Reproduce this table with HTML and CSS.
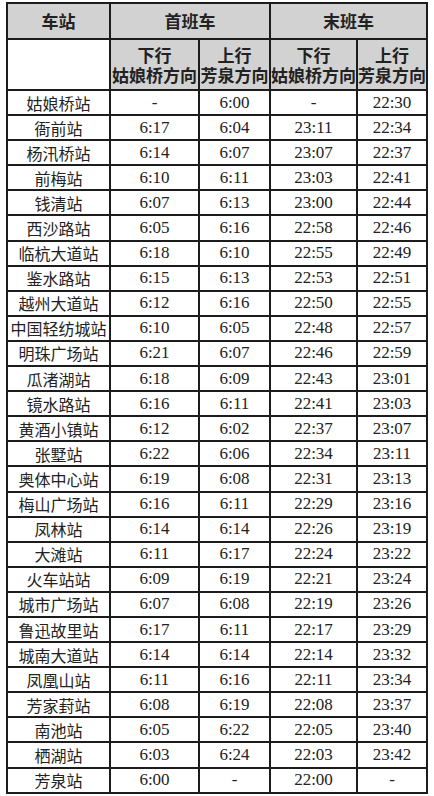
FILE: index.html
```html
<!DOCTYPE html>
<html lang="zh">
<head>
<meta charset="utf-8">
<link rel="stylesheet" href="styles.css">
</head>
<body>
<table class="tt">
<colgroup>
<col class="c-st"><col class="c-a"><col class="c-b"><col class="c-c"><col class="c-d">
</colgroup>
<thead>
<tr class="h1"><th class="gray">车站</th><th class="gray" colspan="2">首班车</th><th class="gray" colspan="2">末班车</th></tr>
<tr class="h2"><th class="blank"></th><th class="gray">下行<br>姑娘桥方向</th><th class="gray">上行<br>芳泉方向</th><th class="gray">下行<br>姑娘桥方向</th><th class="gray">上行<br>芳泉方向</th></tr>
</thead>
<tbody>
<tr><td class="st">姑娘桥站</td><td>-</td><td>6:00</td><td>-</td><td>22:30</td></tr>
<tr><td class="st">衙前站</td><td>6:17</td><td>6:04</td><td>23:11</td><td>22:34</td></tr>
<tr><td class="st">杨汛桥站</td><td>6:14</td><td>6:07</td><td>23:07</td><td>22:37</td></tr>
<tr><td class="st">前梅站</td><td>6:10</td><td>6:11</td><td>23:03</td><td>22:41</td></tr>
<tr><td class="st">钱清站</td><td>6:07</td><td>6:13</td><td>23:00</td><td>22:44</td></tr>
<tr><td class="st">西沙路站</td><td>6:05</td><td>6:16</td><td>22:58</td><td>22:46</td></tr>
<tr><td class="st">临杭大道站</td><td>6:18</td><td>6:10</td><td>22:55</td><td>22:49</td></tr>
<tr><td class="st">鉴水路站</td><td>6:15</td><td>6:13</td><td>22:53</td><td>22:51</td></tr>
<tr><td class="st">越州大道站</td><td>6:12</td><td>6:16</td><td>22:50</td><td>22:55</td></tr>
<tr><td class="st">中国轻纺城站</td><td>6:10</td><td>6:05</td><td>22:48</td><td>22:57</td></tr>
<tr><td class="st">明珠广场站</td><td>6:21</td><td>6:07</td><td>22:46</td><td>22:59</td></tr>
<tr><td class="st">瓜渚湖站</td><td>6:18</td><td>6:09</td><td>22:43</td><td>23:01</td></tr>
<tr><td class="st">镜水路站</td><td>6:16</td><td>6:11</td><td>22:41</td><td>23:03</td></tr>
<tr><td class="st">黄酒小镇站</td><td>6:12</td><td>6:02</td><td>22:37</td><td>23:07</td></tr>
<tr><td class="st">张墅站</td><td>6:22</td><td>6:06</td><td>22:34</td><td>23:11</td></tr>
<tr><td class="st">奥体中心站</td><td>6:19</td><td>6:08</td><td>22:31</td><td>23:13</td></tr>
<tr><td class="st">梅山广场站</td><td>6:16</td><td>6:11</td><td>22:29</td><td>23:16</td></tr>
<tr><td class="st">凤林站</td><td>6:14</td><td>6:14</td><td>22:26</td><td>23:19</td></tr>
<tr><td class="st">大滩站</td><td>6:11</td><td>6:17</td><td>22:24</td><td>23:22</td></tr>
<tr><td class="st">火车站站</td><td>6:09</td><td>6:19</td><td>22:21</td><td>23:24</td></tr>
<tr><td class="st">城市广场站</td><td>6:07</td><td>6:08</td><td>22:19</td><td>23:26</td></tr>
<tr><td class="st">鲁迅故里站</td><td>6:17</td><td>6:11</td><td>22:17</td><td>23:29</td></tr>
<tr><td class="st">城南大道站</td><td>6:14</td><td>6:14</td><td>22:14</td><td>23:32</td></tr>
<tr><td class="st">凤凰山站</td><td>6:11</td><td>6:16</td><td>22:11</td><td>23:34</td></tr>
<tr><td class="st">芳家葑站</td><td>6:08</td><td>6:19</td><td>22:08</td><td>23:37</td></tr>
<tr><td class="st">南池站</td><td>6:05</td><td>6:22</td><td>22:05</td><td>23:40</td></tr>
<tr><td class="st">栖湖站</td><td>6:03</td><td>6:24</td><td>22:03</td><td>23:42</td></tr>
<tr><td class="st">芳泉站</td><td>6:00</td><td>-</td><td>22:00</td><td>-</td></tr>
</tbody>
</table>
</body>
</html>
```
FILE: styles.css
```css
html, body {
  margin: 0;
  padding: 0;
  background: #fff;
}
body {
  padding: 2px 0 0 6px;
}
.tt {
  border-collapse: collapse;
  table-layout: fixed;
  width: 422px;
  color: #1a1a1a;
}
.c-st { width: 103px; }
.c-a { width: 89px; }
.c-b { width: 71px; }
.c-c { width: 87px; }
.c-d { width: 70px; }
.tt th, .tt td {
  border: 2px solid #1c1c1c;
  padding: 0;
  text-align: center;
  vertical-align: middle;
  overflow: hidden;
  white-space: nowrap;
}
.tt th {
  font-family: "Noto Sans CJK SC", sans-serif;
  font-weight: 700;
  font-size: 17px;
  line-height: 20px;
  color: #222;
}
.gray { background: #d2d2d2; }
.blank { background: #fff; }
.h1 th { height: 34px; }
.h2 th { height: 49px; }
.tt td {
  font-family: "Liberation Serif", serif;
  font-size: 17px;
  height: 23.1px;
  line-height: 20px;
  color: #222;
}
.tt td.st {
  font-family: "Noto Sans CJK SC", sans-serif;
  font-size: 16px;
}
```
